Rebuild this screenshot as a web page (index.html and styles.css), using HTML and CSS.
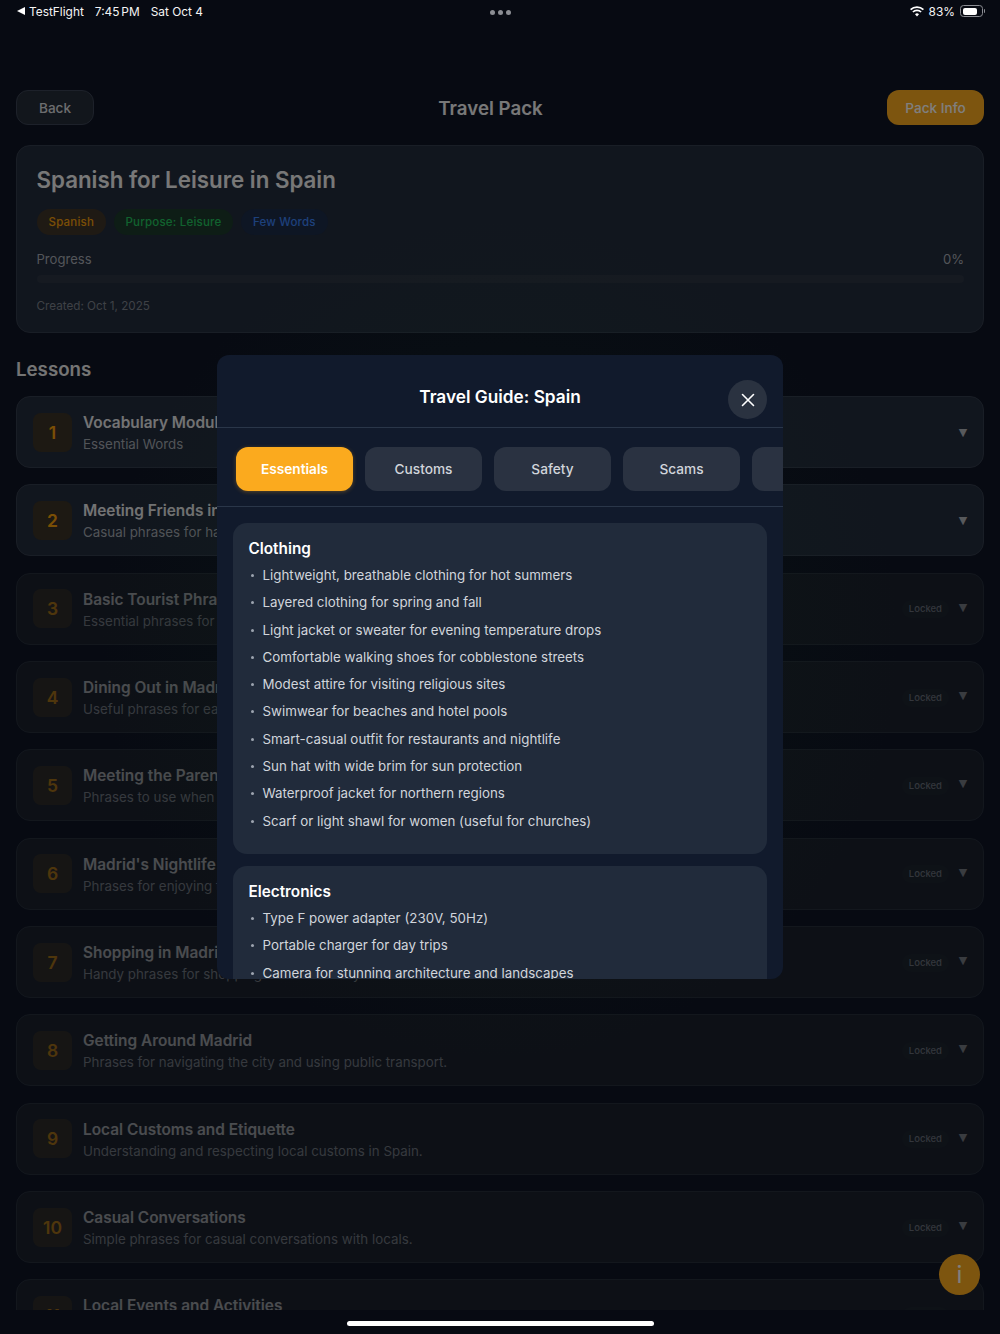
FILE: index.html
```html
<!DOCTYPE html>
<html lang="en">

<head>
    <meta charset="UTF-8">
    <meta name="viewport" content="width=device-width, initial-scale=1.0">
    <title>Travel Pack</title>

    <link rel="stylesheet" href="styles.css">
</head>

<body>
    <div class="status-bar">
        <div class="status-left">
            <span class="status-app">
                <svg class="back-arrow" width="8" height="8" viewBox="0 0 8 8"><path d="M0 4 L8 0 V8 Z" fill="#fff"/></svg>
                TestFlight
            </span>
            <span class="status-time">7:45 PM</span>
            <span>Sat Oct 4</span>
        </div>
        <div class="status-dots"><i></i><i></i><i></i></div>
        <div class="status-right">
            <svg width="14" height="11" viewBox="0 0 14 11">
                <path d="M0.6 3.7 A9 9 0 0 1 13.4 3.7" fill="none" stroke="#fff" stroke-width="1.7"/>
                <path d="M2.9 6 A5.8 5.8 0 0 1 11.1 6" fill="none" stroke="#fff" stroke-width="1.7"/>
                <path d="M5 8.2 A2.8 2.8 0 0 1 9 8.2 L7 10.4 Z" fill="#fff"/>
            </svg>
            <span>83%</span>
            <div class="battery"><div class="battery-level"></div></div>
        </div>
    </div>

    <main class="page">
        <header class="top-bar">
            <button class="btn btn-back">Back</button>
            <h1 class="top-title">Travel Pack</h1>
            <button class="btn btn-info">Pack Info</button>
        </header>

        <section class="pack-card">
            <h2 class="pack-title">Spanish for Leisure in Spain</h2>
            <div class="tags">
                <span class="tag tag-orange">Spanish</span>
                <span class="tag tag-green">Purpose: Leisure</span>
                <span class="tag tag-blue">Few Words</span>
            </div>
            <div class="progress-head">
                <span>Progress</span>
                <span>0%</span>
            </div>
            <div class="progress-track"></div>
            <p class="pack-date">Created: Oct 1, 2025</p>
        </section>

        <h2 class="lessons-title">Lessons</h2>

        <div class="lesson-list">
            <div class="lesson">
                <div class="lesson-num">1</div>
                <div class="lesson-text">
                    <h3>Vocabulary Module</h3>
                    <p>Essential Words</p>
                </div>
                <span class="chevron">▼</span>
            </div>
            <div class="lesson">
                <div class="lesson-num">2</div>
                <div class="lesson-text">
                    <h3>Meeting Friends in Madrid</h3>
                    <p>Casual phrases for hanging out with friends.</p>
                </div>
                <span class="chevron">▼</span>
            </div>
            <div class="lesson locked">
                <div class="lesson-num">3</div>
                <div class="lesson-text">
                    <h3>Basic Tourist Phrases</h3>
                    <p>Essential phrases for getting by as a tourist.</p>
                </div>
                <span class="locked-pill">Locked</span>
                <span class="chevron">▼</span>
            </div>
            <div class="lesson locked">
                <div class="lesson-num">4</div>
                <div class="lesson-text">
                    <h3>Dining Out in Madrid</h3>
                    <p>Useful phrases for eating out at restaurants.</p>
                </div>
                <span class="locked-pill">Locked</span>
                <span class="chevron">▼</span>
            </div>
            <div class="lesson locked">
                <div class="lesson-num">5</div>
                <div class="lesson-text">
                    <h3>Meeting the Parents</h3>
                    <p>Phrases to use when meeting the family.</p>
                </div>
                <span class="locked-pill">Locked</span>
                <span class="chevron">▼</span>
            </div>
            <div class="lesson locked">
                <div class="lesson-num">6</div>
                <div class="lesson-text">
                    <h3>Madrid's Nightlife</h3>
                    <p>Phrases for enjoying the city at night.</p>
                </div>
                <span class="locked-pill">Locked</span>
                <span class="chevron">▼</span>
            </div>
            <div class="lesson locked">
                <div class="lesson-num">7</div>
                <div class="lesson-text">
                    <h3>Shopping in Madrid</h3>
                    <p>Handy phrases for shopping around the city.</p>
                </div>
                <span class="locked-pill">Locked</span>
                <span class="chevron">▼</span>
            </div>
            <div class="lesson locked">
                <div class="lesson-num">8</div>
                <div class="lesson-text">
                    <h3>Getting Around Madrid</h3>
                    <p>Phrases for navigating the city and using public transport.</p>
                </div>
                <span class="locked-pill">Locked</span>
                <span class="chevron">▼</span>
            </div>
            <div class="lesson locked">
                <div class="lesson-num">9</div>
                <div class="lesson-text">
                    <h3>Local Customs and Etiquette</h3>
                    <p>Understanding and respecting local customs in Spain.</p>
                </div>
                <span class="locked-pill">Locked</span>
                <span class="chevron">▼</span>
            </div>
            <div class="lesson locked">
                <div class="lesson-num">10</div>
                <div class="lesson-text">
                    <h3>Casual Conversations</h3>
                    <p>Simple phrases for casual conversations with locals.</p>
                </div>
                <span class="locked-pill">Locked</span>
                <span class="chevron">▼</span>
            </div>
            <div class="lesson locked">
                <div class="lesson-num">11</div>
                <div class="lesson-text">
                    <h3>Local Events and Activities</h3>
                    <p>Phrases for joining in with local events.</p>
                </div>
                <span class="locked-pill">Locked</span>
                <span class="chevron">▼</span>
            </div>
        </div>
    </main>

    <button class="fab">i</button>

    <div class="overlay">
        <div class="modal">
            <div class="modal-header">
                <h2>Travel Guide: Spain</h2>
                <button class="modal-close">
                    <svg width="14" height="14" viewBox="0 0 14 14"><path d="M1.5 1.5 L12.5 12.5 M12.5 1.5 L1.5 12.5" stroke="#fff" stroke-width="1.6" stroke-linecap="round"/></svg>
                </button>
            </div>

            <div class="modal-tabs">
                <button class="tab active">Essentials</button>
                <button class="tab">Customs</button>
                <button class="tab">Safety</button>
                <button class="tab">Scams</button>
                <button class="tab">Money</button>
            </div>

            <div class="modal-body">
                <section class="guide-section">
                    <h3>Clothing</h3>
                    <ul>
                        <li>Lightweight, breathable clothing for hot summers</li>
                        <li>Layered clothing for spring and fall</li>
                        <li>Light jacket or sweater for evening temperature drops</li>
                        <li>Comfortable walking shoes for cobblestone streets</li>
                        <li>Modest attire for visiting religious sites</li>
                        <li>Swimwear for beaches and hotel pools</li>
                        <li>Smart-casual outfit for restaurants and nightlife</li>
                        <li>Sun hat with wide brim for sun protection</li>
                        <li>Waterproof jacket for northern regions</li>
                        <li>Scarf or light shawl for women (useful for churches)</li>
                    </ul>
                </section>
                <section class="guide-section">
                    <h3>Electronics</h3>
                    <ul>
                        <li>Type F power adapter (230V, 50Hz)</li>
                        <li>Portable charger for day trips</li>
                        <li>Camera for stunning architecture and landscapes</li>
                    </ul>
                </section>
            </div>
        </div>
    </div>

    <div class="home-bar"></div>
</body>

</html>
```

FILE: styles.css
```css
* {
    margin: 0;
    padding: 0;
    box-sizing: border-box;
}

body {
    width: 1000px;
    height: 1334px;
    overflow: hidden;
    position: relative;
    background: #0f1524;
    font-family: 'Inter', 'Liberation Sans', sans-serif;
    color: #fff;
}

button {
    font-family: inherit;
    border: none;
}

/* status bar stays bright above the overlay */
.status-bar {
    position: relative;
    z-index: 20;
    height: 24px;
    padding: 0 15px 2px 17px;
    display: flex;
    justify-content: space-between;
    align-items: center;
    font-size: 11.9px;
    color: #f4f4f4;
}

.status-left,
.status-right {
    display: flex;
    align-items: center;
}

.status-left {
    gap: 11px;
}

.status-app {
    display: flex;
    align-items: center;
    gap: 4px;
}

.status-time {
    word-spacing: -1.5px;
}

.status-right {
    gap: 5px;
}

.status-dots {
    position: absolute;
    left: 490px;
    top: 10px;
    display: flex;
    gap: 3px;
}

.status-dots i {
    width: 5px;
    height: 5px;
    border-radius: 50%;
    background: #8b8d93;
}

.battery {
    position: relative;
    width: 23px;
    height: 12px;
    border: 1px solid #8b8d93;
    border-radius: 3.5px;
    padding: 1.5px;
    margin-right: 2px;
}

.battery::after {
    content: '';
    position: absolute;
    right: -3px;
    top: 3px;
    width: 1.5px;
    height: 4px;
    background: #8b8d93;
    border-radius: 0 2px 2px 0;
}

.battery-level {
    width: 83%;
    height: 100%;
    background: #fff;
    border-radius: 2px;
}

/* page under the modal */
.page {
    height: 1286px;
    overflow: hidden;
    padding: 66px 16px 0;
}

.top-bar {
    display: flex;
    justify-content: space-between;
    align-items: center;
    height: 35px;
    margin-bottom: 20px;
}

.btn {
    height: 35px;
    border-radius: 12px;
    font-size: 13.6px;
    font-weight: 500;
}

.btn-back {
    width: 78px;
    background: #252c38;
    border: 1px solid #3a4354;
    color: #d8dade;
}

.btn-info {
    width: 97px;
    background: #fbaa1e;
    color: #fff;
}

.top-title {
    padding-top: 2px;
    font-size: 18.7px;
    font-weight: 600;
    color: #f0f0f0;
}

.pack-card {
    height: 188px;
    padding: 19px 19px 20px 19.5px;
    background: #232c3c;
    border: 1px solid #333c4c;
    border-radius: 14px;
}

.pack-title {
    font-size: 22.3px;
    line-height: 29px;
    font-weight: 600;
    color: #f0f0f0;
}

.tags {
    display: flex;
    gap: 7.5px;
    margin-top: 15px;
}

.tag {
    height: 26px;
    padding: 0 12px;
    border-radius: 13px;
    font-size: 11.5px;
    letter-spacing: 0.2px;
    font-weight: 500;
    line-height: 26px;
}

.tag-orange {
    background: #3f3428;
    color: #f59e0b;
}

.tag-green {
    background: #1c3a2c;
    color: #22c55e;
}

.tag-blue {
    background: #1c2c48;
    color: #3b82f6;
}

.progress-head {
    display: flex;
    justify-content: space-between;
    margin-top: 14px;
    font-size: 13.1px;
    line-height: 20px;
    color: #a6abb3;
}

.progress-track {
    height: 8px;
    margin-top: 6px;
    border-radius: 4px;
    background: #2c3543;
}

.pack-date {
    margin-top: 15px;
    font-size: 11.7px;
    line-height: 16px;
    color: #7d838d;
}

.lessons-title {
    margin-top: 25px;
    margin-bottom: 14px;
    font-size: 18.7px;
    line-height: 24px;
    font-weight: 600;
    color: #e8e8e8;
}

.lesson-list {
    display: flex;
    flex-direction: column;
    gap: 16.35px;
}

.lesson {
    display: flex;
    align-items: center;
    flex-shrink: 0;
    padding: 12px 15px 12px 16px;
    background: #232c3c;
    border: 1px solid #333c4c;
    border-radius: 14px;
}

.lesson.locked > * {
    opacity: 0.6;
}

.lesson.locked {
    background: #1a212d;
    border-color: #262e3b;
}

.lesson-num {
    width: 39px;
    height: 39px;
    margin-right: 11px;
    border-radius: 8px;
    background: #3a3226;
    color: #f59e0b;
    font-size: 17.5px;
    font-weight: 600;
    display: flex;
    justify-content: center;
    align-items: center;
}

.lesson-text {
    flex: 1;
    padding-top: 3px;
}

.lesson-text h3 {
    font-size: 15.4px;
    line-height: 21px;
    font-weight: 600;
    color: #e6e7e9;
}

.lesson-text p {
    font-size: 13.35px;
    line-height: 22px;
    color: #a3a8b1;
}

.locked-pill {
    margin-top: 1px;
    margin-right: 9px;
    padding: 0 7px;
    height: 18px;
    line-height: 18px;
    border-radius: 9px;
    background: #1f2631;
    font-size: 9.5px;
    font-weight: 500;
    color: #9aa0aa;
}

.chevron {
    width: 10px;
    margin-top: 1px;
    font-family: 'DejaVu Sans', sans-serif;
    font-size: 11px;
    line-height: 12px;
    text-align: center;
    color: #aeb2b8;
}

.lesson.locked .chevron {
    margin-top: -2px;
}

.fab {
    position: absolute;
    left: 939px;
    top: 1254px;
    width: 41px;
    height: 41px;
    border-radius: 50%;
    background: #fbaa1e;
    color: #fff;
    font-size: 24px;
    font-weight: 400;
}

/* modal layer */
.overlay {
    position: absolute;
    inset: 0;
    z-index: 10;
    display: flex;
    justify-content: center;
    align-items: center;
    background: radial-gradient(ellipse 400px 420px at 500px 640px, rgba(20, 50, 30, 0.25), rgba(20, 50, 30, 0)), rgba(0, 0, 0, 0.5);
}

.modal {
    width: 566px;
    height: 624px;
    display: flex;
    flex-direction: column;
    overflow: hidden;
    background: #111a2c;
    border-radius: 12px;
}

.modal-header {
    position: relative;
    height: 73px;
    flex-shrink: 0;
    padding-top: 31px;
    border-bottom: 1px solid #2a3649;
    text-align: center;
}

.modal-header h2 {
    font-size: 17.25px;
    line-height: 22px;
    font-weight: 600;
}

.modal-close {
    position: absolute;
    right: 16px;
    top: 25px;
    width: 39px;
    height: 39px;
    border-radius: 50%;
    background: #2a3240;
    display: flex;
    justify-content: center;
    align-items: center;
}

.modal-tabs {
    display: flex;
    gap: 12px;
    flex-shrink: 0;
    height: 79px;
    padding: 19px 0 15px 19px;
    overflow: hidden;
    border-bottom: 1px solid #2a3649;
}

.tab {
    flex: 0 0 117px;
    height: 44px;
    padding-bottom: 1px;
    border-radius: 12px;
    background: #2a3241;
    color: #d1d5db;
    font-size: 13.7px;
    font-weight: 500;
}

.tab.active {
    background: #fbaa1e;
    color: #fff;
    font-weight: 600;
    box-shadow: 0 1px 4px rgba(251, 170, 30, 0.3);
}

.modal-body {
    flex: 1;
    overflow: hidden;
    padding: 16px 16px 0;
}

.guide-section {
    padding: 15px 15.5px 16px;
    margin-bottom: 12px;
    background: #212b3b;
    border-radius: 14px;
}

.guide-section h3 {
    font-size: 15.3px;
    line-height: 22px;
    font-weight: 600;
    margin-bottom: 5px;
}

.guide-section ul {
    list-style: none;
}

.guide-section li {
    position: relative;
    padding-left: 14px;
    margin-bottom: 6.3px;
    font-size: 13.35px;
    line-height: 21px;
    color: #d1d5db;
}

.guide-section li::before {
    content: '';
    position: absolute;
    left: 2px;
    top: 9px;
    width: 3px;
    height: 3px;
    border-radius: 50%;
    background: #9ca3af;
}

.home-bar {
    position: absolute;
    z-index: 20;
    left: 347px;
    top: 1321px;
    width: 307px;
    height: 5px;
    border-radius: 3px;
    background: #fff;
}
```
